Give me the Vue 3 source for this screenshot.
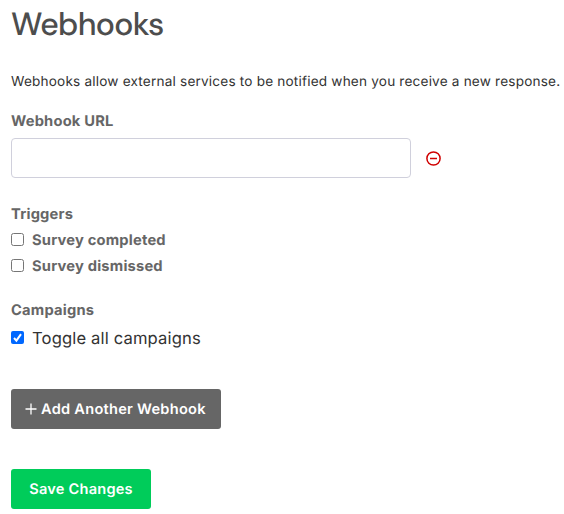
<script setup>
import { ref } from 'vue'
const url = ref('')
const triggers = ref([
  { label: 'Survey completed', on: false },
  { label: 'Survey dismissed', on: false }
])
const all = ref(true)
</script>

<template>
  <main class="page">
    <h1>Webhooks</h1>
    <p class="intro">Webhooks allow external services to be notified when you receive a new response.</p>
    <h2>Webhook URL</h2>
    <div class="url-row">
      <input v-model="url" class="url" type="text" />
      <button class="remove" aria-label="Remove">
        <svg width="15" height="15" viewBox="0 0 15 15" fill="none" stroke="#d00000" stroke-width="1.5"><circle cx="7.5" cy="7.5" r="6.6" /><path d="M4 7.5h7" /></svg>
      </button>
    </div>
    <section class="triggers">
      <h2>Triggers</h2>
      <label v-for="t in triggers" :key="t.label" class="check bold"><input v-model="t.on" type="checkbox" /><span>{{ t.label }}</span></label>
    </section>
    <section class="campaigns">
      <h2>Campaigns</h2>
      <label class="check large">
        <input v-model="all" class="hidden" type="checkbox" />
        <svg class="box" width="13" height="13" viewBox="0 0 13 13" fill="none"><rect width="13" height="13" rx="2" fill="#0068ff" /><path v-if="all" d="M3 7l2.4 2.6L10 3.2" stroke="#fff" stroke-width="2" /></svg>
        <span>Toggle all campaigns</span>
      </label>
    </section>
    <button class="btn add">
      <svg width="12" height="12" viewBox="0 0 12 12" stroke="#fff" stroke-width="1.3"><path d="M6 .5v11M.5 6h11" /></svg>
      <span>Add Another Webhook</span>
    </button>
    <button class="btn save"><span>Save Changes</span></button>
  </main>
</template>

<style>
body { background: #fff; }
</style>

<style scoped>
.page { display: flex; flex-direction: column; align-items: flex-start; height: 514px; overflow: hidden; padding-left: 11px; box-sizing: border-box; font-family: Inter, sans-serif; color: #333; text-rendering: geometricPrecision; }
h1 { margin: 4px 0 0; font: 500 32px/40px "DM Sans", Inter, sans-serif; letter-spacing: -.68px; color: #4d4d4d; }
.intro { margin: 28px 0 0; font-size: 13.6px; letter-spacing: .19px; line-height: 20px; white-space: nowrap; }
h2 { margin: 0; font-size: 14.7px; letter-spacing: .2px; font-weight: 700; line-height: 20px; color: #666; }
.intro + h2 { margin-top: 19px; }
.url-row { display: flex; align-items: center; gap: 15px; margin-top: 7px; }
.url { box-sizing: border-box; width: 400px; height: 40px; border: 1px solid #d0d0dc; border-radius: 4px; background: #fff; padding: 0 12px; font: 16px Inter, sans-serif; }
.remove { display: flex; padding: 0; border: 0; background: none; }
.triggers { margin-top: 26px; }
.triggers h2 { margin-bottom: 3px; }
.campaigns { margin-top: 21px; }
.check { position: relative; display: flex; align-items: center; gap: 8px; height: 26px; }
.check input { width: 13px; height: 13px; margin: -2px 0 0; }
.check .hidden { position: absolute; opacity: 0; }
.box { margin-top: -2px; }
.bold { font-size: 14.7px; letter-spacing: .2px; font-weight: 700; color: #666; }
.large { height: 36px; font-size: 16.6px; letter-spacing: .14px; }
.large span { padding-top: 1px; }
.btn { display: flex; align-items: center; justify-content: center; height: 40px; border: 0; border-radius: 3px; padding: 0; color: #fff; font: 600 14.6px Inter, sans-serif; letter-spacing: .22px; flex: none; text-rendering: geometricPrecision; }
.add { width: 210px; justify-content: flex-start; padding-left: 14px; gap: 4px; background: #666; margin-top: 33px; }
.add span { letter-spacing: .26px; }
.save { width: 140px; background: #00cc5a; margin-top: 40px; }
</style>
